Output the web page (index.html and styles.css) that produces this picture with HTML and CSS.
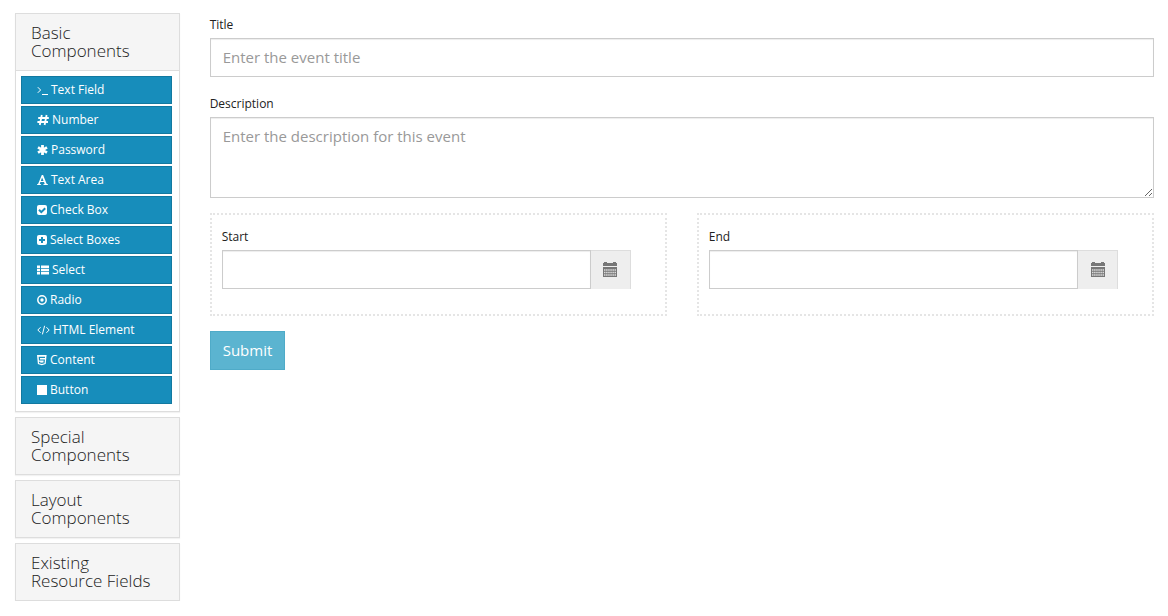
FILE: index.html
```html
<!DOCTYPE html>
<html lang="en">
<head>
    <meta charset="UTF-8">
    <meta name="viewport" content="width=device-width, initial-scale=1.0">
    <title>Form Builder</title>
    <link rel="stylesheet" href="styles.css">
</head>
<body>
    <div class="builder">
        <aside class="sidebar">
            <section class="panel">
                <h4 class="panel-title">Basic Components</h4>
                <div class="panel-body">
                    <button type="button" class="component">
                        <svg width="11" height="12" viewBox="0 0 11 12" fill="none" stroke="currentColor"><path d="M.8 3.2 3.6 6 .8 8.8M5 10.5h6"/></svg>
                        Text Field
                    </button>
                    <button type="button" class="component">
                        <svg width="12" height="12" viewBox="0 0 12 12" fill="none" stroke="currentColor" stroke-width="1.8"><path d="M4.8 1 2.8 11M9.6 1l-2 10M1.2 4h10.6M.4 8H11"/></svg>
                        Number
                    </button>
                    <button type="button" class="component">
                        <svg width="11" height="12" viewBox="0 0 11 12" fill="none" stroke="currentColor" stroke-width="2.8"><path d="M5.5 1v10M1 3.4l9 5.2M10 3.4 1 8.6"/></svg>
                        Password
                    </button>
                    <button type="button" class="component">
                        <svg width="11" height="12" viewBox="0 0 11 12" fill="currentColor" fill-rule="evenodd"><path d="M4.8 1h1.3l3.5 8.8 1.3.5v.7H6.4v-.7l1.3-.4-.7-2H3.4l-.7 2 1.4.4v.7H.1v-.7l1.1-.5zM5.1 3.4 3.8 7h2.7z"/></svg>
                        Text Area
                    </button>
                    <button type="button" class="component">
                        <svg width="10" height="12" viewBox="0 0 10 12"><rect y="1" width="10" height="10" rx="2" fill="currentColor"/><path class="cut" d="m2 5.8 2.3 2.3L8.2 4.2"/></svg>
                        Check Box
                    </button>
                    <button type="button" class="component">
                        <svg width="10" height="12" viewBox="0 0 10 12"><rect y="1" width="10" height="10" rx="2" fill="currentColor"/><path class="cut" d="M5 3v6M2 6h6"/></svg>
                        Select Boxes
                    </button>
                    <button type="button" class="component">
                        <svg width="12" height="12" viewBox="0 0 12 12" fill="currentColor"><path d="M0 1.5h3v2.4H0zM4 1.5h8v2.4H4zM0 4.8h3v2.4H0zM4 4.8h8v2.4H4zM0 8.1h3v2.4H0zM4 8.1h8v2.4H4z"/></svg>
                        Select
                    </button>
                    <button type="button" class="component">
                        <svg width="10" height="12" viewBox="0 0 10 12"><circle cx="5" cy="6" r="4.2" fill="none" stroke="currentColor" stroke-width="1.5"/><circle cx="5" cy="6" r="1.7" fill="currentColor"/></svg>
                        Radio
                    </button>
                    <button type="button" class="component">
                        <svg width="13" height="12" viewBox="0 0 13 12" fill="none" stroke="currentColor"><path d="M3.6 3.2.8 6l2.8 2.8M9.4 3.2 12.2 6 9.4 8.8M7.6 1.8 5.4 10.4"/></svg>
                        HTML Element
                    </button>
                    <button type="button" class="component">
                        <svg width="10" height="12" viewBox="0 0 10 12"><path d="M0 1h9.6l-.9 9-3.9 1.2L.9 10z" fill="currentColor"/><path class="cut thin" d="M8 3.4H2.3L2.5 6h4.8L7 8.7l-2.2.7-2.2-.7-.1-1"/></svg>
                        Content
                    </button>
                    <button type="button" class="component">
                        <svg width="10" height="12" viewBox="0 0 10 12" fill="currentColor"><path d="M0 1h10v10H0z"/></svg>
                        Button
                    </button>
                </div>
            </section>
            <section class="panel">
                <h4 class="panel-title">Special Components</h4>
            </section>
            <section class="panel">
                <h4 class="panel-title">Layout Components</h4>
            </section>
            <section class="panel">
                <h4 class="panel-title">Existing Resource Fields</h4>
            </section>
        </aside>

        <form class="event-form">
            <div class="form-group">
                <label for="title">Title</label>
                <input class="form-control" type="text" id="title" placeholder="Enter the event title">
            </div>
            <div class="form-group">
                <label for="description">Description</label>
                <textarea class="form-control" id="description" placeholder="Enter the description for this event"></textarea>
            </div>
            <div class="columns">
                <div class="column">
                    <label for="start">Start</label>
                    <div class="input-group">
                        <input class="form-control" type="text" id="start">
                        <button type="button" class="addon" aria-label="Choose start date">
                            <svg width="14" height="15" viewBox="0 0 14 15"><path d="M0 1h1V0h3v1h6V0h3v1h1v3H0zM0 5h14v10H0z" fill="currentColor"/><path class="days" d="M1 8h12M1 10.5h12M1 13h12"/></svg>
                        </button>
                    </div>
                </div>
                <div class="column">
                    <label for="end">End</label>
                    <div class="input-group">
                        <input class="form-control" type="text" id="end">
                        <button type="button" class="addon" aria-label="Choose end date">
                            <svg width="14" height="15" viewBox="0 0 14 15"><path d="M0 1h1V0h3v1h6V0h3v1h1v3H0zM0 5h14v10H0z" fill="currentColor"/><path class="days" d="M1 8h12M1 10.5h12M1 13h12"/></svg>
                        </button>
                    </div>
                </div>
            </div>
            <button type="submit" class="submit">Submit</button>
        </form>
    </div>
</body>
</html>
```
FILE: styles.css
```css
* {
    box-sizing: border-box;
}
body {
    margin: 0;
    font-family: "Open Sans", "Liberation Sans", sans-serif;
    font-size: 15px;
    color: #222;
    background-color: #fff;
}
.builder {
    display: grid;
    grid-template-columns: 1fr 5fr;
    padding-top: 13px;
}

/* Sidebar */
.sidebar {
    display: flex;
    flex-direction: column;
    gap: 5px;
    padding: 0 15px;
}
.panel {
    border: 1px solid #ddd;
    box-shadow: 0 1px 1px rgba(0,0,0,0.05);
}
.panel-title {
    margin: 0;
    padding: 10px 15px;
    font-size: 17px;
    font-weight: 300;
    line-height: 18px;
    background-color: #f5f5f5;
}
.panel-body {
    display: flex;
    flex-direction: column;
    gap: 2px;
    padding: 5px 7px 7px 5px;
    border-top: 1px solid #ddd;
}
.component {
    display: flex;
    align-items: center;
    gap: 3px;
    height: 28px;
    padding: 0 15px 1px;
    border: 1px solid #1279a0;
    background-color: #178dbb;
    color: #fff;
    font-family: inherit;
    font-size: 12px;
    font-weight: 500;
    text-align: left;
}
.component svg {
    flex: none;
}
.cut {
    fill: none;
    stroke: #178dbb;
    stroke-width: 2;
}
.cut.thin {
    stroke-width: 1.2;
}

/* Form */
.event-form {
    padding: 0 14px 0 15px;
}
.form-group {
    margin-bottom: 15px;
}
label {
    display: block;
    margin-bottom: 4px;
    padding-top: 3px;
    font-size: 12px;
    line-height: 18px;
}
.form-control {
    display: block;
    width: 100%;
    height: 39px;
    padding: 7px 12px 9px;
    border: 1px solid #ccc;
    border-radius: 0;
    box-shadow: inset 0 1px 1px rgba(0,0,0,0.075);
    background-color: #fff;
    color: #6f6f6f;
    font-family: inherit;
    font-size: 15px;
    line-height: 21px;
}
textarea.form-control {
    height: 81px;
    padding-top: 8px;
}
.form-control::placeholder {
    color: #999;
}
.columns {
    display: grid;
    grid-template-columns: 1fr 1fr;
    gap: 30px;
    margin-bottom: 15px;
}
.column {
    padding: 10px 34px 25px 10px;
    border: 2px dotted #e5e5e5;
}
.input-group {
    display: flex;
}
.addon {
    display: flex;
    flex: none;
    align-items: center;
    justify-content: center;
    width: 40px;
    padding: 0 0 2px;
    border: 1px solid #ddd;
    border-width: 1px 1px 0 0;
    background-color: #eee;
    color: #777;
}
.days {
    fill: none;
    stroke: #ddd;
    stroke-width: 1.5;
    stroke-dasharray: 1.5 0.6;
}
.submit {
    height: 39px;
    padding: 0 12px 2px;
    border: 1px solid #4fabc8;
    background-color: #5bb4d0;
    color: #fff;
    font-family: inherit;
    font-size: 15px;
}
```
